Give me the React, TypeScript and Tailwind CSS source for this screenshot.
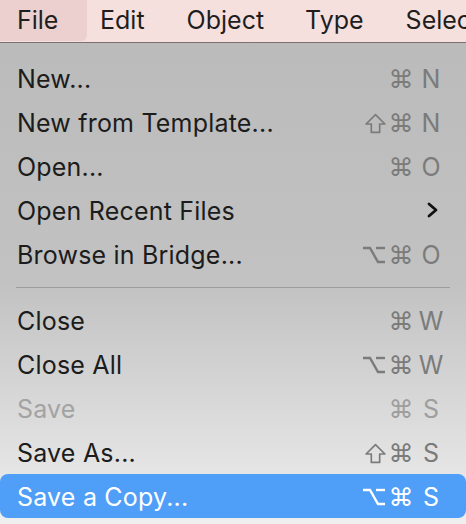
import React from "react";

const Cmd = () => <span className="inline-block w-[26px] mr-[4px] text-center">⌘</span>;

function Shift() {
  return (
    <svg width="23" height="23" viewBox="0 0 22 22" className="inline-block mr-[1px]" fill="none" stroke="currentColor" strokeWidth="1.6" strokeLinejoin="round">
      <path d="M11 2.5 L20 11.5 H15 V19.5 H7 V11.5 H2 Z" />
    </svg>
  );
}

function Opt() {
  return (
    <svg width="24" height="22" viewBox="0 0 24 22" className="inline-block mr-[2px]" fill="none" stroke="currentColor" strokeWidth="2.4">
      <path d="M1 4 H8 L16 18 H23" />
      <path d="M14 4 H23" />
    </svg>
  );
}

type Item = {
  label: string;
  mods?: ("shift" | "opt")[];
  key?: string;
  arrow?: boolean;
  disabled?: boolean;
  active?: boolean;
};

const group1: Item[] = [
  { label: "New...", key: "N" },
  { label: "New from Template...", mods: ["shift"], key: "N" },
  { label: "Open...", key: "O" },
  { label: "Open Recent Files", arrow: true },
  { label: "Browse in Bridge...", mods: ["opt"], key: "O" },
];
const group2: Item[] = [
  { label: "Close", key: "W" },
  { label: "Close All", mods: ["opt"], key: "W" },
  { label: "Save", key: "S", disabled: true },
  { label: "Save As...", mods: ["shift"], key: "S" },
  { label: "Save a Copy...", mods: ["opt"], key: "S", active: true },
];

function Row({ item }: { item: Item }) {
  const textColor = item.active ? "text-white" : item.disabled ? "text-[#a3a3a3]" : "text-[#1c1c1c]";
  const keyColor = item.active ? "text-white" : item.disabled ? "text-[#9e9e9e]" : "text-[#7b7b7b]";
  return (
    <div className={`h-[44px] flex items-center pl-[17px] pr-[22px] rounded-[8px] ${item.active ? "bg-[#4f9ef8]" : ""}`}>
      <span className={`flex-1 text-[25px] tracking-[0.2px] leading-none pt-[2px] ${textColor}`}>{item.label}</span>
      {item.arrow ? (
        <svg width="14" height="18" viewBox="0 0 14 18" fill="none" stroke="#111" strokeWidth="2.8" strokeLinecap="round" strokeLinejoin="round" className="mr-[4px]">
          <path d="M3 3 L10 9 L3 15" />
        </svg>
      ) : (
        <span className={`flex items-center text-[25px] leading-none pt-[2px] ${keyColor}`}>
          {item.mods?.includes("shift") && <Shift />}
          {item.mods?.includes("opt") && <Opt />}
          <Cmd />
          <span className="inline-block w-[26px] text-center">{item.key}</span>
        </span>
      )}
    </div>
  );
}

export default function App() {
  return (
    <div className="w-[466px] h-[524px] overflow-hidden flex flex-col" style={{ fontFamily: '"Inter", "Liberation Sans", sans-serif' }}>
      <div className="h-[43px] bg-[#f6e0de] flex items-stretch text-[25px] text-[#1e1e1e] border-b border-[#7d7070] shrink-0 overflow-hidden">
        <div className="w-[87px] shrink-0 bg-[#ecd0cf] rounded-br-[6px] flex items-center pl-[17px] mb-[1px]">File</div>
        <div className="shrink-0 flex items-center pl-[13px]">Edit</div>
        <div className="shrink-0 flex items-center pl-[42px]">Object</div>
        <div className="shrink-0 flex items-center pl-[41px]">Type</div>
        <div className="shrink-0 flex items-center pl-[42px] whitespace-nowrap">Select</div>
      </div>
      <div className="flex-1 bg-gradient-to-b from-[#bbbbbb] via-[#c2c2c2] to-[#efefef] pt-[13px]">
        {group1.map((i) => <Row key={i.label} item={i} />)}
        <div className="h-[22px] flex items-center px-[16px]">
          <div className="h-[1px] w-full bg-[#9c9c9c]" />
        </div>
        {group2.map((i) => <Row key={i.label} item={i} />)}
      </div>
    </div>
  );
}
